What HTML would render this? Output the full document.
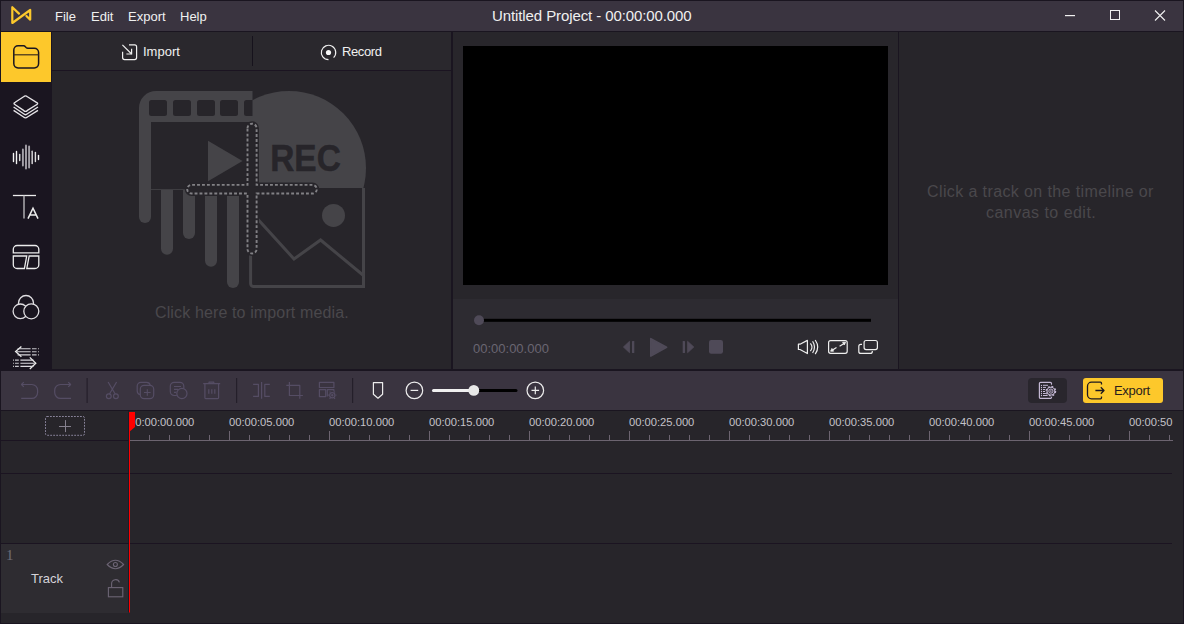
<!DOCTYPE html>
<html><head><meta charset="utf-8">
<style>
*{margin:0;padding:0;box-sizing:border-box}
html,body{width:1184px;height:624px;overflow:hidden;background:#1a1520;font-family:"Liberation Sans",sans-serif}
.a{position:absolute}
#win{position:absolute;left:0;top:0;width:1184px;height:624px;background:#1a1520;overflow:hidden}
.t{position:absolute;white-space:pre;line-height:1}
svg{position:absolute;left:0;top:0;overflow:visible}
.rl{top:417px;font-size:11.2px;color:#c4c2c8;letter-spacing:0px}
</style></head><body>
<div id="win">
  <!-- ===== title bar ===== -->
  <div class="a" style="left:1px;top:1px;width:1182px;height:30px;background:#3a3440"></div>
  <div class="t" style="left:55px;top:10px;font-size:13px;color:#f0f0f0">File</div>
  <div class="t" style="left:91px;top:10px;font-size:13px;color:#f0f0f0">Edit</div>
  <div class="t" style="left:128px;top:10px;font-size:13px;color:#f0f0f0">Export</div>
  <div class="t" style="left:180px;top:10px;font-size:13px;color:#f0f0f0">Help</div>
  <div class="t" style="left:492px;top:8px;font-size:15px;letter-spacing:-0.1px;color:#f0f0f0">Untitled Project - 00:00:00.000</div>
  <svg width="1184" height="624">
    <!-- logo -->
    <path d="M19,13.6 L12.3,7.2 L12.3,23 L30.2,10 L30.2,19.6 L26.4,16" fill="none" stroke="#fcc82c" stroke-width="2.2" stroke-linecap="round" stroke-linejoin="round"/>
    <!-- window controls -->
    <rect x="1065" y="15" width="10" height="1.2" fill="#f0f0f0"/>
    <rect x="1110.5" y="10.5" width="9" height="9" fill="none" stroke="#f0f0f0" stroke-width="1"/>
    <path d="M1155,10.5 L1165,20.5 M1165,10.5 L1155,20.5" stroke="#f0f0f0" stroke-width="1.1"/>
  </svg>

  <!-- ===== sidebar ===== -->
  <div class="a" style="left:1px;top:32px;width:50px;height:50px;background:#fdc82b"></div>
  <svg width="1184" height="624">
    <!-- folder -->
    <path d="M13.8,50 A4.3,4.3 0 0 1 18.1,45.7 H23.6 Q24.6,45.7 25.4,46.7 L26.1,47.5 Q26.8,48.2 27.8,48.2 H34.3 A4.3,4.3 0 0 1 38.6,52.5 V63.6 A4.3,4.3 0 0 1 34.3,67.9 H18.1 A4.3,4.3 0 0 1 13.8,63.6 Z" fill="none" stroke="#1a1520" stroke-width="1.5"/>
    <path d="M13.8,54.8 H38.6" stroke="#3a2c1c" stroke-width="1.2"/>
    <!-- layers -->
    <g fill="none" stroke="#e6e4e8" stroke-width="1.35" stroke-linejoin="round">
      <path d="M23.6,96.8 Q25.5,94.8 27.4,96.8 L36.4,102.4 Q38.9,103.6 36.4,104.8 L27.4,110.4 Q25.5,112.3 23.6,110.4 L15.2,104.7 Q12.8,103.5 15.2,102.3 Z"/>
      <path d="M13.6,107 L23.6,113.8 Q25.5,115.6 27.4,113.8 L38,107"/>
      <path d="M13.6,110.4 L23.6,117 Q25.5,118.8 27.4,117 L38,110.4"/>
    </g>
    <!-- waveform -->
    <g stroke-linecap="round">
      <path d="M13.5,153.5 V161.5 M16.5,151.5 V163.5" stroke="#f4f4f4" stroke-width="1.4"/>
      <path d="M19.7,154.5 V160.5" stroke="#d8d8d8" stroke-width="1.5"/>
      <path d="M22.9,149.5 V165.5 M26,145.5 V168.5 M29.1,146.5 V167.5" stroke="#a4a0a8" stroke-width="1.9"/>
      <path d="M32.2,151.2 V163.5" stroke="#c8c6ca" stroke-width="1.6"/>
      <path d="M35.4,152.5 V161.5" stroke="#e0e0e0" stroke-width="1.4"/>
      <path d="M38.5,155.5 V159.5" stroke="#f4f4f4" stroke-width="1.4"/>
    </g>
    <!-- text TA -->
    <g fill="none" stroke="#ececec" stroke-width="1.3">
      <path d="M12.9,195.5 H36"/>
      <path d="M24,195.5 V218.6" stroke="#b8b6ba" stroke-width="1.4"/>
      <path d="M28,218.6 L33,208.2 L38,218.6 M29.8,215 H36.2" stroke-width="1.5"/>
    </g>
    <!-- template -->
    <g fill="none" stroke="#ececec" stroke-width="1.3">
      <path d="M13.3,252.8 V249.3 A3.8,3.8 0 0 1 17.1,245.5 H35 A3.8,3.8 0 0 1 38.8,249.3 V252.8 Z"/>
      <path d="M13.3,256 H26.7 L24.4,268.5 H17.1 A3.8,3.8 0 0 1 13.3,264.7 Z"/>
      <path d="M29.2,256 H38.8 V264.7 A3.8,3.8 0 0 1 35,268.5 H26.8 Z"/>
    </g>
    <!-- color circles -->
    <g fill="#1a1520" stroke="#e0dee2" stroke-width="1.3">
      <circle cx="26" cy="303" r="7.5"/>
      <circle cx="20.4" cy="311.3" r="7.3"/>
      <circle cx="31.3" cy="311.3" r="7.5"/>
    </g>
    <!-- transitions -->
    <g fill="none" stroke="#ececec" stroke-width="1.15">
      <path d="M21.4,346.4 L15.6,351.6 L21.4,356.8" stroke-width="1.3"/>
      <path d="M17.6,348.7 H30.6 M16.6,351.7 H30.6 M17.6,354.8 H30.6" stroke="#d8d6da"/>
      <path d="M32,348.7 H36.6 M32,351.7 H36.6 M32,354.8 H36.6" stroke="#c4c2c8"/>
      <path d="M38.2,348.7 H39 M38.2,351.7 H39 M38.2,354.8 H39" stroke="#dcdcdc"/>
      <path d="M29.8,357.4 L35.8,363.2 L29.8,369" stroke-width="1.3"/>
      <path d="M20.4,360.1 H33.4 M20.4,363.2 H34.6 M20.4,366.4 H33.4" stroke="#dcdadf"/>
      <path d="M15,360.1 H18.8 M15,363.2 H18.8 M15,366.4 H18.8" stroke="#c8c6cc"/>
      <path d="M13,360.1 H13.8 M13,363.2 H13.8 M13,366.4 H13.8" stroke="#e8e8e8"/>
    </g>
  </svg>

  <!-- ===== media panel ===== -->
  <div class="a" style="left:52px;top:32px;width:399px;height:337px;background:#27252a"></div>
  <div class="a" style="left:52px;top:32px;width:399px;height:38px;background:#2a282d"></div>
  <div class="a" style="left:52px;top:70px;width:399px;height:1px;background:#1b1421"></div>
  <div class="a" style="left:252px;top:36px;width:1px;height:30px;background:#16121c"></div>
  <div class="t" style="left:143px;top:45px;font-size:13px;color:#f0f0f0">Import</div>
  <div class="t" style="left:342px;top:45px;font-size:13px;letter-spacing:-0.4px;color:#f0f0f0">Record</div>
  <svg width="1184" height="624">
    <!-- import icon -->
    <path d="M129,44.8 H134.6 A2,2 0 0 1 136.6,46.8 V57.6 A2,2 0 0 1 134.6,59.6 H124.6 A2,2 0 0 1 122.6,57.6 V51.8" fill="none" stroke="#f0f0f0" stroke-width="1.2"/>
    <path d="M122.4,44.8 L131.6,54" fill="none" stroke="#f0f0f0" stroke-width="1.2"/>
    <path d="M126.4,54 H131.6 V48.8" fill="none" stroke="#f0f0f0" stroke-width="1.2"/>
    <!-- record icon -->
    <path d="M328.5,59.7 A7.2,7.2 0 1 1 333.6,57.6" fill="none" stroke="#f0f0f0" stroke-width="1.2"/>
    <circle cx="328.5" cy="52.5" r="2.6" fill="#f8f8f8"/>
  </svg>
    <svg width="1184" height="624">
    <defs>
      <clipPath id="cr"><rect x="252" y="0" width="200" height="188"/></clipPath>
    </defs>
    <g fill="#454448">
      <circle cx="289" cy="168" r="77" clip-path="url(#cr)"/>
      <!-- film strip outer -->
      <path d="M139,108 A17,17 0 0 1 156,91 H252.5 V190 H139 Z"/>
      <!-- drips -->
      <path d="M139,150 H151 V217 A6,6 0 0 1 139,217 Z"/>
      <path d="M161,185 H173 V248.7 A6,6 0 0 1 161,248.7 Z"/>
      <path d="M183,185 H195 V233 A6,6 0 0 1 183,233 Z"/>
      <path d="M205,185 H217 V260.7 A6,6 0 0 1 205,260.7 Z"/>
      <path d="M227,185 H239 V282 A6,6 0 0 1 227,282 Z"/>
    </g>
    <g fill="#27252a">
      <rect x="149" y="100" width="18" height="16" rx="2.5"/>
      <rect x="173" y="100" width="18" height="16" rx="2.5"/>
      <rect x="197" y="100" width="18" height="16" rx="2.5"/>
      <rect x="220" y="100" width="18" height="16" rx="2.5"/>
      <path d="M246.5,100 H252.5 V116 H246.5 A2.5,2.5 0 0 1 244,113.5 V102.5 A2.5,2.5 0 0 1 246.5,100 Z"/>
      <rect x="151" y="122" width="101.5" height="67.2"/>
      <rect x="151" y="190" width="10" height="40"/>
    </g>
    <path d="M208,140.7 L242.5,161 L208,181.3 Z" fill="#454448"/>
    <!-- image frame -->
    <path d="M250.6,188 V283.6 A3,3 0 0 0 253.6,286.6 H363.5 V188" fill="#27252a" stroke="#454448" stroke-width="3"/>
    <circle cx="333.5" cy="215.4" r="11.5" fill="#454448"/>
    <path d="M251,211.8 L294,259 L320.6,240 L363.5,275.5" fill="none" stroke="#454448" stroke-width="3"/>
    <!-- REC -->
    <text x="270.2" y="171" font-family="Liberation Sans" font-weight="bold" font-size="36" fill="#27252a" stroke="#27252a" stroke-width="0.5" textLength="70.6" lengthAdjust="spacingAndGlyphs">REC</text>
    <!-- dashed cross -->
    <path id="crs" d="M247.5,128.25 A4.55,4.55 0 0 1 256.6,128.25 V184.9 H312.5 A4.3,4.3 0 0 1 312.5,193.5 H256.6 V249 A4.55,4.55 0 0 1 247.5,249 V193.5 H191.5 A4.3,4.3 0 0 1 191.5,184.9 H247.5 Z" fill="#27252a" stroke="#27252a" stroke-width="4.8"/>
    <path d="M247.5,128.25 A4.55,4.55 0 0 1 256.6,128.25 V184.9 H312.5 A4.3,4.3 0 0 1 312.5,193.5 H256.6 V249 A4.55,4.55 0 0 1 247.5,249 V193.5 H191.5 A4.3,4.3 0 0 1 191.5,184.9 H247.5 Z" fill="none" stroke="#828185" stroke-width="1.9" stroke-linecap="butt" stroke-dasharray="2.9 2.04"/>
  </svg>

  <div class="t" style="left:155px;top:305px;font-size:16px;letter-spacing:0.13px;color:#4a484c">Click here to import media.</div>

  <!-- ===== preview panel ===== -->
  <div class="a" style="left:453px;top:32px;width:445px;height:337px;background:#28262b"></div>
  <div class="a" style="left:453px;top:299px;width:445px;height:70px;background:#2d2b31"></div>
  <div class="a" style="left:463px;top:46px;width:425px;height:239px;background:#000"></div>
    <svg width="1184" height="624">
    <rect x="479" y="318.8" width="392" height="3" fill="#000"/>
    <circle cx="479" cy="320.2" r="5" fill="#4f4a58"/>
    <g fill="#4f4a58" stroke="#4f4a58" stroke-linejoin="round">
      <path d="M623.4,347 L629.5,341.3 V352.7 Z" stroke-width="0.8"/>
      <rect x="632" y="341" width="2.3" height="12" stroke="none" rx="0.5"/>
      <path d="M650.8,338.6 L666.6,347.3 L650.8,356.1 Z" stroke-width="1.6"/>
      <rect x="682.7" y="341" width="2.3" height="12" stroke="none" rx="0.5"/>
      <path d="M687.6,341.3 L693.8,347 L687.6,352.7 Z" stroke-width="0.8"/>
      <rect x="709" y="340.1" width="14" height="13.6" rx="2.2" stroke="none"/>
    </g>
    <g fill="none" stroke="#eeeeee" stroke-width="1.2" stroke-linejoin="round">
      <path d="M798.4,344.2 H800 L807.4,340.4 V353.6 L800,349.5 H798.4 Z"/>
      <path d="M810.4,343.4 Q813.6,347.2 810.4,351.2"/>
      <path d="M812.6,341.3 Q816.4,347.2 812.6,353"/>
      <path d="M815.2,340 Q820.2,347.2 815.2,354.2"/>
      <rect x="828.6" y="340.6" width="18.6" height="12.7" rx="2"/>
      <path d="M839.6,346.2 L844,343.4 M836.5,347.6 L832.2,350.2"/>
      <path d="M842.6,342.3 L845.6,342.2 L844.3,345 Z M833.6,351.2 L830.6,351.2 L831.9,348.4 Z" fill="#eeeeee" stroke-width="0.8"/>
      <rect x="864.1" y="340.5" width="13.3" height="9.1" rx="2"/>
      <path d="M862,344.4 H860.8 A2,2 0 0 0 858.8,346.4 V351.4 A2,2 0 0 0 860.8,353.4 H870.3 A2,2 0 0 0 872.3,351.4 V351"/>
    </g>
  </svg>
  <div class="t" style="left:473px;top:342px;font-size:13px;color:#6a6672">00:00:00.000</div>


  <!-- ===== right panel ===== -->
  <div class="a" style="left:899px;top:32px;width:284px;height:337px;background:#27252a"></div>
  <div class="t" style="left:927px;top:184px;font-size:16px;letter-spacing:0.39px;color:#4a484c">Click a track on the timeline or</div>
  <div class="t" style="left:986px;top:205px;font-size:16px;letter-spacing:0.47px;color:#4a484c">canvas to edit.</div>

  <!-- ===== toolbar ===== -->
  <div class="a" style="left:1px;top:371px;width:1182px;height:39px;background:#3a3440"></div>
    <svg width="1184" height="624">
    <g fill="none" stroke="#554d64" stroke-width="1.2" stroke-linejoin="round">
      <!-- undo -->
      <path d="M23.8,382.2 L21.5,384.5 L23.8,386.8 M21.3,384.5 H31.8 A5.8,5.8 0 0 1 37.6,390.3 V392.6 A5.8,5.8 0 0 1 31.8,398.4 H21.2"/>
      <!-- redo -->
      <path d="M68.3,382.2 L70.6,384.5 L68.3,386.8 M70.8,384.5 H60.5 A5.8,5.8 0 0 0 54.7,390.3 V392.6 A5.8,5.8 0 0 0 60.5,398.4 H71"/>
      <!-- scissors -->
      <path d="M108.1,382 L115.2,394 M116.6,382 L109.5,394"/>
      <circle cx="108.8" cy="396.2" r="2.4"/>
      <circle cx="115.9" cy="396.2" r="2.4"/>
      <!-- copy plus -->
      <path d="M140.2,394.6 A3.8,3.8 0 0 1 137.2,390.9 V386.1 A3.8,3.8 0 0 1 141,382.3 H146.6 A3.8,3.8 0 0 1 150.3,385.3"/>
      <rect x="140.3" y="385.3" width="13.4" height="13.3" rx="3.8"/>
      <path d="M147.3,389.2 V395.8 M144,392.5 H150.6" stroke-width="1.1"/>
      <!-- chat circle -->
      <path d="M176.8,395.5 H174.2 A3.9,3.9 0 0 1 170.3,391.6 V386.2 A3.9,3.9 0 0 1 174.2,382.3 H179.9 A3.9,3.9 0 0 1 183.8,386.2 V388.4"/>
      <path d="M174,386.5 H181 M174,389.4 H178.2 M174,392.4 H176.2" stroke-width="1.1"/>
      <circle cx="181.9" cy="393.5" r="5.1" fill="#3a3440"/>
      <!-- trash -->
      <path d="M203.2,383.6 H220.2 M209,383.4 V382.2 H213.8 V383.4"/>
      <path d="M204.9,383.8 V397.8 Q204.9,398.6 205.7,398.6 H217.8 Q218.6,398.6 218.6,397.8 V383.8"/>
      <path d="M208.8,389.2 V393.8 M211.8,389.2 V393.8 M214.8,389.2 V393.8"/>
      <!-- split -->
      <path d="M253.1,384.3 H258.4 V396.4 H253.1"/>
      <path d="M261.6,382 V398.8"/>
      <path d="M269.8,384.3 H264.8 V396.4 H269.8"/>
      <!-- crop -->
      <path d="M289.4,382 V395.5 H302.9 M286.3,385.4 H299.8 V398.8"/>
      <!-- layout gear -->
      <rect x="319.4" y="382.4" width="14.5" height="5.1"/>
      <rect x="319.4" y="389.7" width="6.3" height="6.9"/>
      <path d="M327.3,396.6 V389.7 H333.9 V391.6"/>
      <circle cx="332.3" cy="395.2" r="2.6"/>
      <circle cx="332.3" cy="395.2" r="0.6" fill="#554d64"/>
    </g>
    <path d="M330.4,392.4 L329.6,391.6 M334.2,392.4 L335,391.6 M330.4,398 L329.6,398.8 M334.2,398 L335,398.8 M329,395.2 H328.2 M335.6,395.2 H336.4" stroke="#554d64" stroke-width="1.2"/>
    <g fill="#241f2a">
      <rect x="86.5" y="378" width="1.2" height="25"/>
      <rect x="236" y="378" width="1.2" height="25"/>
      <rect x="352" y="378" width="1.2" height="25"/>
    </g>
    <g fill="none" stroke="#ececec" stroke-width="1.2" stroke-linejoin="round">
      <path d="M373.4,382.6 H382.6 V394.2 L378,398.2 L373.4,394.2 Z"/>
      <circle cx="414.4" cy="390.4" r="8.3"/>
      <path d="M410.6,390.4 H418.2"/>
      <circle cx="535.3" cy="390.4" r="8.3"/>
      <path d="M531.5,390.4 H539.1 M535.3,386.6 V394.2"/>
    </g>
    <path d="M473.8,390.4 H516" stroke="#000" stroke-width="3" stroke-linecap="round"/>
    <path d="M433.5,390.4 H473.8" stroke="#f0f0f0" stroke-width="3" stroke-linecap="round"/>
    <circle cx="473.8" cy="390.4" r="5.4" fill="#e8e8e8"/>
  </svg>

  <div class="a" style="left:1028px;top:378px;width:39px;height:25px;border-radius:4px;background:#29262d"></div>
  <div class="a" style="left:1083px;top:378px;width:80px;height:25px;border-radius:3px;background:#fdc82b"></div>
  <div class="t" style="left:1114px;top:384px;font-size:13px;letter-spacing:-0.3px;color:#2a1c1c">Export</div>
    <svg width="1184" height="624">
    <g fill="none" stroke="#c4b8d4" stroke-width="1.2" stroke-linecap="round">
      <path d="M1051.5,384.2 V383.6 A1.2,1.2 0 0 0 1050.3,382.4 H1040.6 A1.2,1.2 0 0 0 1039.4,383.6 V397.2 A1.2,1.2 0 0 0 1040.6,398.4 H1050.3 A1.2,1.2 0 0 0 1051.5,397.2 V396.6"/>
      <path d="M1041.5,385.3 V385.4 M1041.5,387.4 V387.5 M1041.5,389.5 V389.6 M1041.5,391.5 V391.6 M1041.5,393.5 V393.6 M1041.5,395.5 V395.6" stroke-width="1.3"/>
      <path d="M1043.4,385.3 H1047.6 M1043.4,387.4 H1045.6 M1043.4,389.5 H1044.8 M1043.4,391.5 H1044.8 M1043.4,393.5 H1045.6 M1043.4,395.5 H1047.6" stroke-width="1"/>
    </g>
    <circle cx="1050.9" cy="391.1" r="5.6" fill="#29262d"/>
    <g fill="none" stroke="#c4b8d4">
      <circle cx="1050.9" cy="391.1" r="3.9" stroke-width="1.1"/>
      <circle cx="1050.9" cy="391.1" r="4.7" stroke-width="1.3" stroke-dasharray="1.85 1.84"/>
      <circle cx="1050.9" cy="391.1" r="2.1" stroke-width="1"/>
    </g>
    <circle cx="1050.9" cy="391.1" r="0.8" fill="#c4b8d4"/>
    <g fill="none" stroke="#1d1820" stroke-width="1.3" stroke-linejoin="round">
      <path d="M1101.5,384.4 V383.2 A1,1 0 0 0 1100.5,382.2 H1091.5 A4,4 0 0 0 1087.5,386.2 V394.8 A4,4 0 0 0 1091.5,398.8 H1100.5 A1,1 0 0 0 1101.5,397.8 V396.6"/>
      <path d="M1095.4,390.5 H1104 M1100.8,387.3 L1104,390.5 L1100.8,393.7"/>
    </g>
  </svg>


  <!-- ===== timeline ===== -->
  <div class="a" style="left:1px;top:411px;width:1182px;height:212px;background:#27252a"></div>
  <div class="a" style="left:1px;top:440px;width:128px;height:1px;background:#1b1421"></div>
  <div class="a" style="left:128px;top:411px;width:1px;height:201px;background:#1e1a24"></div>
  <div class="a" style="left:1px;top:544px;width:127px;height:69px;background:#2e2c31"></div>
  <div class="a" style="left:1px;top:473px;width:1171px;height:1px;background:#1b1421"></div>
  <div class="a" style="left:1px;top:543px;width:1171px;height:1px;background:#1b1421"></div>
  <div class="a" style="left:129px;top:411px;width:1044px;height:30px;overflow:hidden">
    <div class="a" style="left:-129px;top:-411px;width:1184px;height:624px">
    <div class="t rl" style="left:129px">00:00:00.000</div>
<div class="t rl" style="left:229px">00:00:05.000</div>
<div class="t rl" style="left:329px">00:00:10.000</div>
<div class="t rl" style="left:429px">00:00:15.000</div>
<div class="t rl" style="left:529px">00:00:20.000</div>
<div class="t rl" style="left:629px">00:00:25.000</div>
<div class="t rl" style="left:729px">00:00:30.000</div>
<div class="t rl" style="left:829px">00:00:35.000</div>
<div class="t rl" style="left:929px">00:00:40.000</div>
<div class="t rl" style="left:1029px">00:00:45.000</div>
<div class="t rl" style="left:1129px">00:00:50.000</div>
    </div>
  </div>
  <svg width="1184" height="624">
    <g fill="#6c6470">
      <rect x="129" y="440" width="1044" height="1"/>
      <rect x="129" y="431" width="1" height="9"/>
<rect x="149" y="435" width="1" height="5"/>
<rect x="169" y="435" width="1" height="5"/>
<rect x="189" y="435" width="1" height="5"/>
<rect x="209" y="435" width="1" height="5"/>
<rect x="229" y="431" width="1" height="9"/>
<rect x="249" y="435" width="1" height="5"/>
<rect x="269" y="435" width="1" height="5"/>
<rect x="289" y="435" width="1" height="5"/>
<rect x="309" y="435" width="1" height="5"/>
<rect x="329" y="431" width="1" height="9"/>
<rect x="349" y="435" width="1" height="5"/>
<rect x="369" y="435" width="1" height="5"/>
<rect x="389" y="435" width="1" height="5"/>
<rect x="409" y="435" width="1" height="5"/>
<rect x="429" y="431" width="1" height="9"/>
<rect x="449" y="435" width="1" height="5"/>
<rect x="469" y="435" width="1" height="5"/>
<rect x="489" y="435" width="1" height="5"/>
<rect x="509" y="435" width="1" height="5"/>
<rect x="529" y="431" width="1" height="9"/>
<rect x="549" y="435" width="1" height="5"/>
<rect x="569" y="435" width="1" height="5"/>
<rect x="589" y="435" width="1" height="5"/>
<rect x="609" y="435" width="1" height="5"/>
<rect x="629" y="431" width="1" height="9"/>
<rect x="649" y="435" width="1" height="5"/>
<rect x="669" y="435" width="1" height="5"/>
<rect x="689" y="435" width="1" height="5"/>
<rect x="709" y="435" width="1" height="5"/>
<rect x="729" y="431" width="1" height="9"/>
<rect x="749" y="435" width="1" height="5"/>
<rect x="769" y="435" width="1" height="5"/>
<rect x="789" y="435" width="1" height="5"/>
<rect x="809" y="435" width="1" height="5"/>
<rect x="829" y="431" width="1" height="9"/>
<rect x="849" y="435" width="1" height="5"/>
<rect x="869" y="435" width="1" height="5"/>
<rect x="889" y="435" width="1" height="5"/>
<rect x="909" y="435" width="1" height="5"/>
<rect x="929" y="431" width="1" height="9"/>
<rect x="949" y="435" width="1" height="5"/>
<rect x="969" y="435" width="1" height="5"/>
<rect x="989" y="435" width="1" height="5"/>
<rect x="1009" y="435" width="1" height="5"/>
<rect x="1029" y="431" width="1" height="9"/>
<rect x="1049" y="435" width="1" height="5"/>
<rect x="1069" y="435" width="1" height="5"/>
<rect x="1089" y="435" width="1" height="5"/>
<rect x="1109" y="435" width="1" height="5"/>
<rect x="1129" y="431" width="1" height="9"/>
<rect x="1149" y="435" width="1" height="5"/>
<rect x="1169" y="435" width="1" height="5"/>
    </g>
  </svg>
    <div class="t" style="left:6px;top:547.6px;font-size:15px;color:#6e6c78;font-family:'Liberation Serif',serif">1</div>
  <div class="t" style="left:31px;top:572px;font-size:13px;color:#d4d2d8">Track</div>
  <svg width="1184" height="624">
    <g fill="none" stroke="#6c6474" stroke-width="1.1">
      <path d="M107.2,564.5 Q115.4,556.1 123.6,564.5 Q115.4,572.9 107.2,564.5 Z"/>
      <circle cx="115.4" cy="564.5" r="2"/>
      <rect x="108.4" y="587.6" width="14.4" height="9.2"/>
      <path d="M111.6,587.6 V583.6 A4,4 0 0 1 119.4,582.4"/>
    </g>
    <rect x="45.5" y="416.5" width="39" height="18.8" rx="1.5" fill="none" stroke="#88839a" stroke-width="1" stroke-dasharray="1.8 1.2"/>
    <path d="M59,426.5 H71 M65.5,420.1 V432.1" stroke="#85808e" stroke-width="1"/>
  </svg>

  <svg width="1184" height="624">
    <path d="M129,412 H135 V427 L130,431.2 V612.6 H129 Z" fill="#ff0000"/>
  </svg>
</div>
</body></html>
